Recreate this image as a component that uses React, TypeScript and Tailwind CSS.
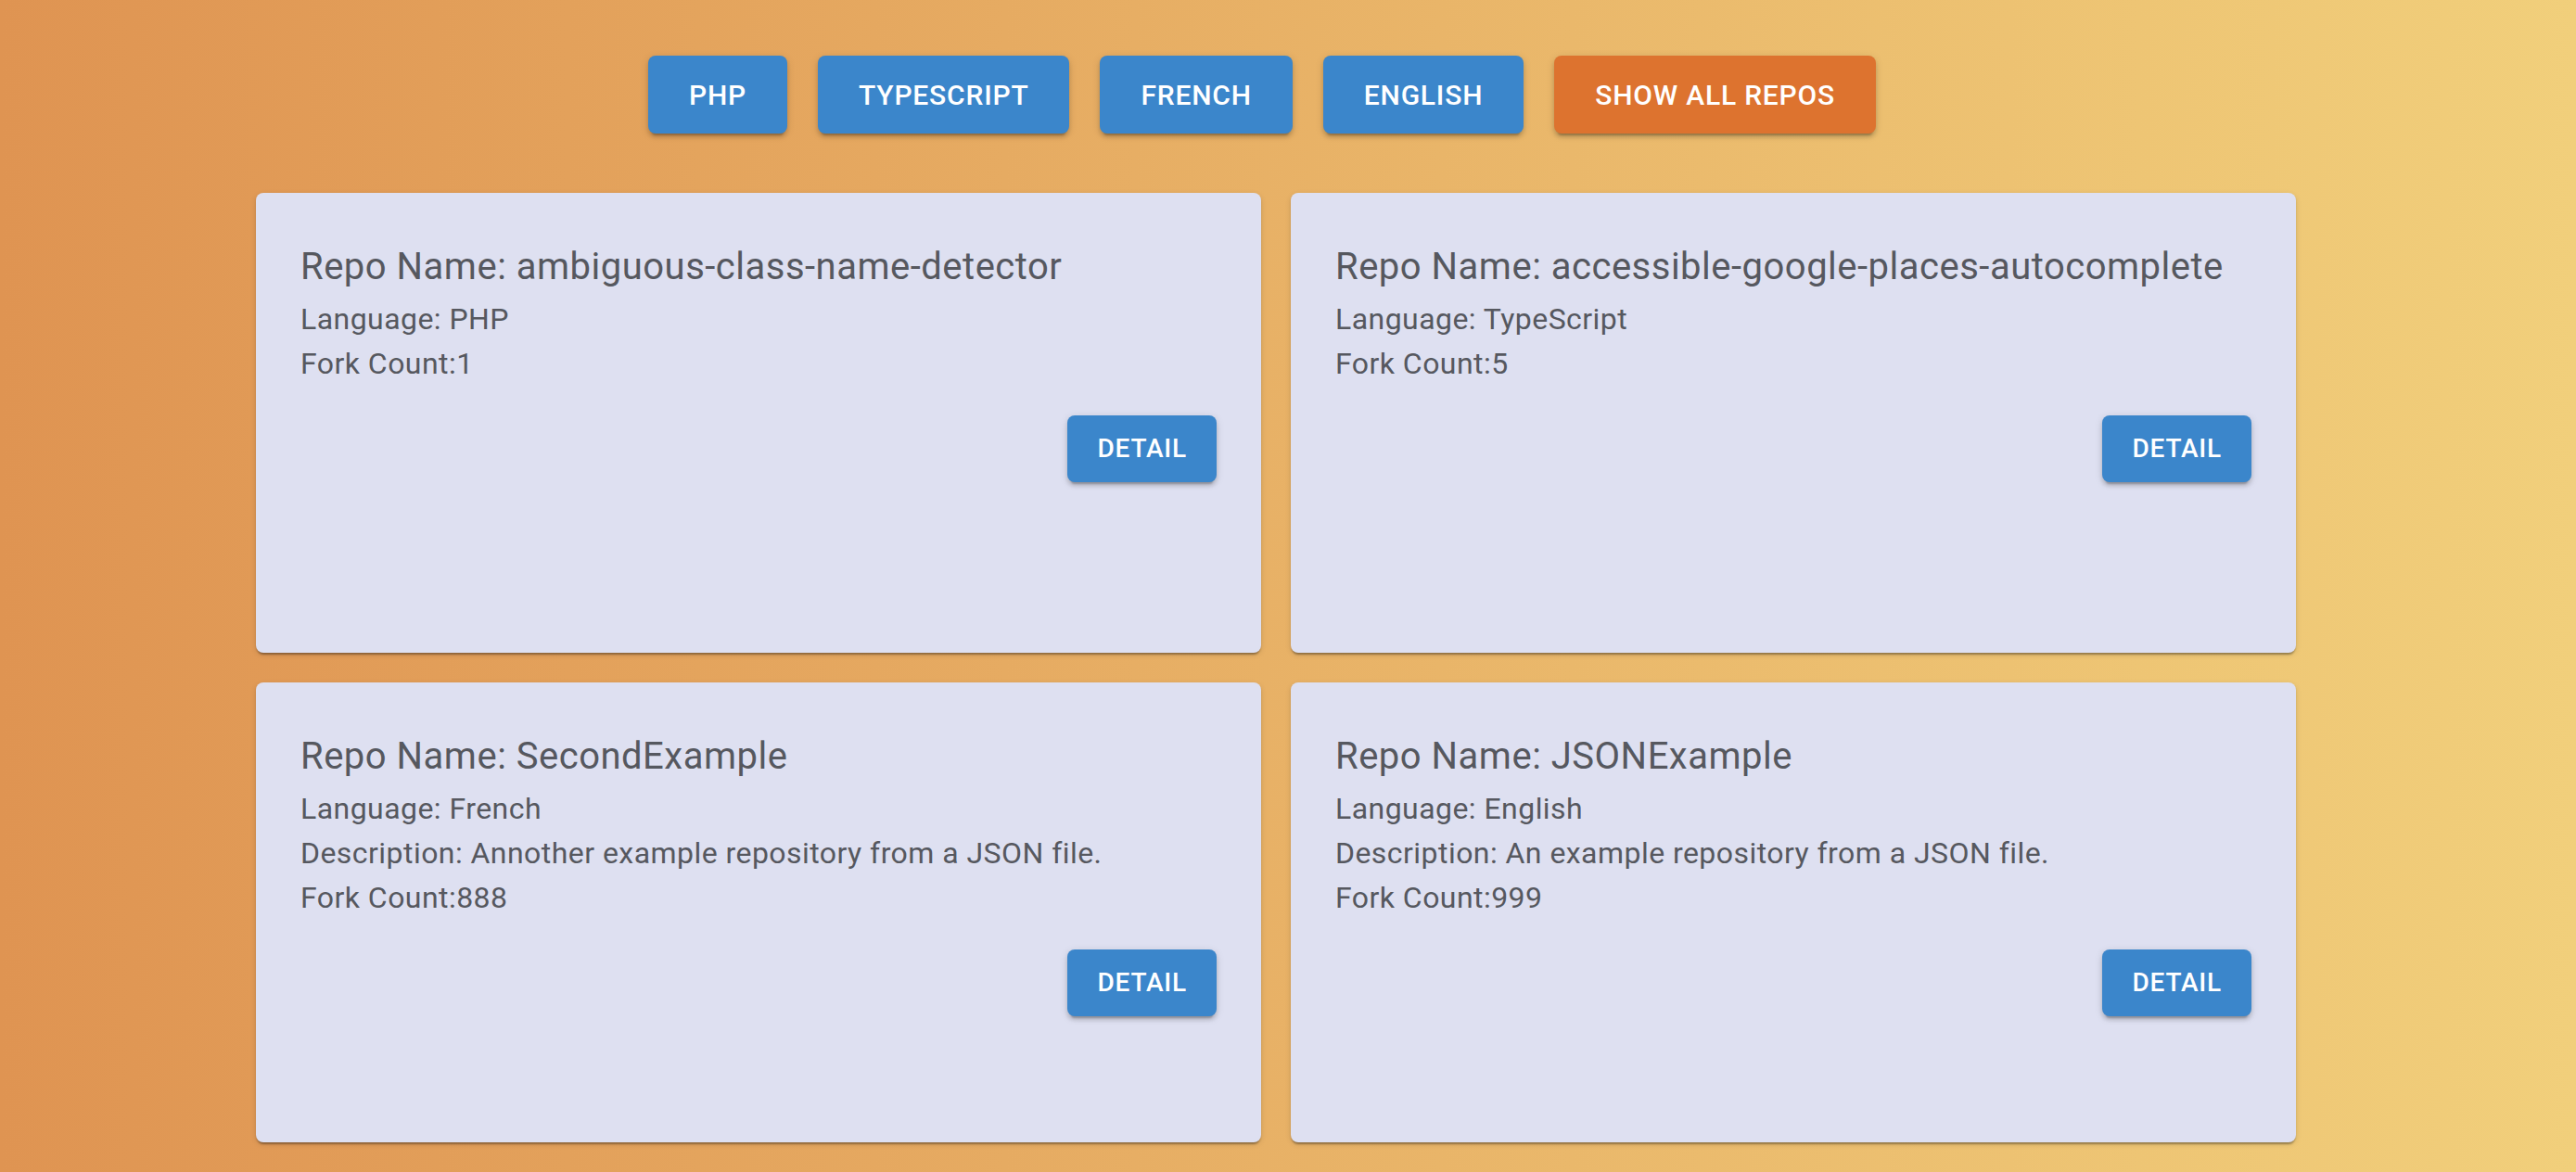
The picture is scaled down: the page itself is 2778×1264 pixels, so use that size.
import React from "react";

type Repo = {
    name: string;
    language: string;
    description?: string;
    forks: number;
};

const filters = ["PHP", "TypeScript", "French", "English"];

const repos: Repo[] = [
    { name: "ambiguous-class-name-detector", language: "PHP", forks: 1 },
    { name: "accessible-google-places-autocomplete", language: "TypeScript", forks: 5 },
    {
        name: "SecondExample",
        language: "French",
        description: "Annother example repository from a JSON file.",
        forks: 888,
    },
    {
        name: "JSONExample",
        language: "English",
        description: "An example repository from a JSON file.",
        forks: 999,
    },
];

const btnShadow =
    "shadow-[0_6px_2px_-4px_rgba(0,0,0,0.2),0_4px_4px_0_rgba(0,0,0,0.14),0_2px_10px_0_rgba(0,0,0,0.12)]";

function RepoCard({ repo }: { repo: Repo }) {
    return (
        <div className="flex h-[496px] flex-col rounded-[8px] bg-[#dee0f1] p-[48px] text-[#56585f] shadow-[0_4px_2px_-2px_rgba(0,0,0,0.2),0_2px_2px_0_rgba(0,0,0,0.14),0_2px_6px_0_rgba(0,0,0,0.12)]">
            <h2 className="text-[40px] leading-[64px] font-normal tracking-[0.5px]">Repo Name: {repo.name}</h2>
            <p className="text-[32px] leading-[48px] tracking-[0.45px]">Language: {repo.language}</p>
            {repo.description && (
                <p className="text-[32px] leading-[48px] tracking-[0.45px]">Description: {repo.description}</p>
            )}
            <p className="text-[32px] leading-[48px] tracking-[0.45px]">Fork Count:{repo.forks}</p>
            <div className="mt-[32px] flex justify-end">
                <button
                    className={`h-[72px] rounded-[8px] bg-[#3b86cb] px-[32px] text-[28px] font-medium tracking-[0.8px] text-white uppercase ${btnShadow}`}
                >
                    Detail
                </button>
            </div>
        </div>
    );
}

export default function App() {
    return (
        <div
            className="h-[1264px] w-full bg-[linear-gradient(to_right,#df9452,#f1cf7b)] pt-[60px]"
            style={{ fontFamily: "Roboto, 'Liberation Sans', sans-serif" }}
        >
            <div className="flex gap-[33px] pl-[699px]">
                {filters.map((f) => (
                    <button
                        key={f}
                        className={`h-[84px] rounded-[8px] bg-[#3b86cb] px-[44px] text-[30px] font-medium tracking-[0.8px] text-white uppercase ${btnShadow}`}
                    >
                        {f}
                    </button>
                ))}
                <button
                    className={`h-[84px] rounded-[8px] bg-[#dd732f] px-[44px] text-[30px] font-medium tracking-[0.8px] text-white uppercase ${btnShadow}`}
                >
                    Show all repos
                </button>
            </div>
            <div className="mt-[64px] ml-[276px] grid w-[2200px] grid-cols-2 gap-[32px]">
                {repos.map((r) => (
                    <RepoCard key={r.name} repo={r} />
                ))}
            </div>
        </div>
    );
}
